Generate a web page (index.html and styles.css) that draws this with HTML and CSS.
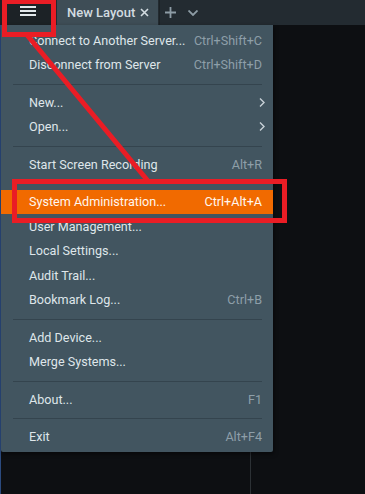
FILE: index.html
```html
<!DOCTYPE html>
<html lang="en">
<head>
    <meta charset="UTF-8">
    <meta name="viewport" content="width=device-width, initial-scale=1.0">
    <title>Main Menu</title>
    <link rel="stylesheet" href="styles.css">
</head>
<body>
    <div class="app">
        <header class="tabbar">
            <button class="menu-btn" aria-label="Main menu">
                <svg width="16" height="10" viewBox="0 0 16 10"><rect x="0" y="0" width="16" height="2"/><rect x="0" y="4" width="16" height="2"/><rect x="0" y="8" width="16" height="2"/></svg>
            </button>
            <div class="tab active">
                <span class="tab-title">New Layout</span>
                <svg class="tab-close" width="9" height="9" viewBox="0 0 9 9"><path d="M1 1 L8 8 M8 1 L1 8"/></svg>
            </div>
            <button class="tab-tool" aria-label="New tab">
                <svg width="11" height="11" viewBox="0 0 11 11"><path d="M5.5 0 V11 M0 5.5 H11"/></svg>
            </button>
            <button class="tab-tool" aria-label="Tabs">
                <svg width="10" height="6" viewBox="0 0 10 6"><path d="M0.5 0.5 L5 5 L9.5 0.5"/></svg>
            </button>
        </header>

        <div class="workspace">
            <div class="scene"></div>
            <div class="panel"></div>
        </div>

        <nav class="main-menu">
            <div class="item"><span>Connect to Another Server...</span><span class="key">Ctrl+Shift+C</span></div>
            <div class="item"><span>Disconnect from Server</span><span class="key">Ctrl+Shift+D</span></div>
            <div class="sep"></div>
            <div class="item"><span>New...</span><svg class="sub" width="6" height="9" viewBox="0 0 6 9"><path d="M1 0.5 L5 4.5 L1 8.5"/></svg></div>
            <div class="item"><span>Open...</span><svg class="sub" width="6" height="9" viewBox="0 0 6 9"><path d="M1 0.5 L5 4.5 L1 8.5"/></svg></div>
            <div class="sep"></div>
            <div class="item"><span>Start Screen Recording</span><span class="key">Alt+R</span></div>
            <div class="sep"></div>
            <div class="item hover"><span>System Administration...</span><span class="key">Ctrl+Alt+A</span></div>
            <div class="item"><span>User Management...</span></div>
            <div class="item"><span>Local Settings...</span></div>
            <div class="item"><span>Audit Trail...</span></div>
            <div class="item"><span>Bookmark Log...</span><span class="key">Ctrl+B</span></div>
            <div class="sep"></div>
            <div class="item"><span>Add Device...</span></div>
            <div class="item"><span>Merge Systems...</span></div>
            <div class="sep"></div>
            <div class="item"><span>About...</span><span class="key">F1</span></div>
            <div class="sep"></div>
            <div class="item"><span>Exit</span><span class="key">Alt+F4</span></div>
        </nav>

        <!-- red callout drawn over the screenshot -->
        <div class="mark mark-menu"></div>
        <div class="mark mark-item"></div>
        <svg class="mark-line" width="365" height="494" viewBox="0 0 365 494"><line x1="27" y1="35" x2="148" y2="181"/></svg>
    </div>
</body>
</html>
```

FILE: styles.css
```css
* {
    margin: 0;
    padding: 0;
    box-sizing: border-box;
    font-family: 'Roboto', 'Liberation Sans', sans-serif;
}

body {
    background: #0d0f12;
    width: 365px;
    height: 494px;
    overflow: hidden;
}

.app {
    position: relative;
    height: 100%;
    display: flex;
    flex-direction: column;
    border-left: 1px solid #2b4a7e;
}

.tabbar {
    height: 25px;
    background: #232b31;
    display: flex;
    align-items: stretch;
}

button {
    border: none;
    background: none;
    display: flex;
    align-items: center;
    justify-content: center;
}

.menu-btn {
    width: 55px;
    margin-left: -1px;
    background: #1c2226;
    padding-bottom: 3px;
}

.menu-btn svg {
    fill: #e2e8eb;
}

.tab {
    margin-left: 2px;
    width: 101px;
    background: #3e4d56;
    display: flex;
    align-items: center;
    padding: 0 9px 0 10px;
    justify-content: space-between;
}

.tab-title {
    color: #d3dce1;
    font-size: 13px;
    font-weight: 500;
}

.tab-close {
    stroke: #d3dce1;
    stroke-width: 1.6;
}

.tab-tool {
    width: 22px;
    margin-left: 1px;
    border-left: 1px solid #1c2226;
}

.tab-tool + .tab-tool {
    border-left: none;
}

.tab-tool svg {
    stroke: #8d9ca5;
    stroke-width: 1.8;
    fill: none;
}

.workspace {
    flex: 1;
    display: flex;
}

.scene {
    width: 250px;
    border-right: 1px solid #2c3135;
}

.panel {
    flex: 1;
}

.main-menu {
    position: absolute;
    top: 25px;
    left: 0;
    width: 272px;
    background: #425560;
    padding: 3px 0 3px;
    border-radius: 0 0 2px 2px;
    box-shadow: 1px 2px 4px rgba(0, 0, 0, 0.5);
}

.item {
    height: 24.5px;
    display: flex;
    align-items: center;
    justify-content: space-between;
    padding: 0 11px 0 28px;
    color: #dfe6ea;
    font-size: 12.6px;
}

.item .key {
    color: #8e9fa9;
}

.item.hover {
    background: #f16a00;
    color: #fff6ee;
}

.item.hover .key {
    color: #fff6ee;
}

.sub {
    stroke: #c9d2d7;
    stroke-width: 1.4;
    fill: none;
    margin-right: -3px;
}

.sep {
    height: 1px;
    background: #34444e;
    margin: 6.5px 11px 5.5px 12px;
}

.mark {
    position: absolute;
    border: 5px solid #ea1d25;
}

.mark-menu {
    left: 1px;
    top: -1px;
    width: 54px;
    height: 38px;
}

.mark-item {
    left: 11px;
    top: 179px;
    width: 275px;
    height: 44px;
}

.mark-line {
    position: absolute;
    left: -1px;
    top: 0;
}

.mark-line line {
    stroke: #ea1d25;
    stroke-width: 5;
}
```
